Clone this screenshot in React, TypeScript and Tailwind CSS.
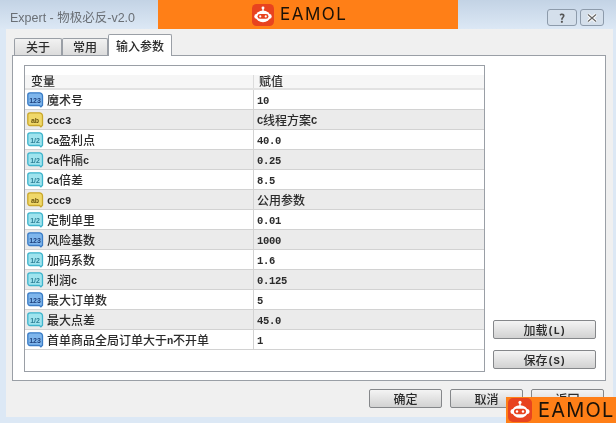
import type { ReactNode } from "react";

const rows: { kind: "int" | "str" | "dbl"; name: string; value: string }[] = [
  { kind: "int", name: "魔术号", value: "10" },
  { kind: "str", name: "ccc3", value: "C线程方案C" },
  { kind: "dbl", name: "Ca盈利点", value: "40.0" },
  { kind: "dbl", name: "Ca件隔c", value: "0.25" },
  { kind: "dbl", name: "Ca倍差", value: "8.5" },
  { kind: "str", name: "ccc9", value: "公用参数" },
  { kind: "dbl", name: "定制单里", value: "0.01" },
  { kind: "int", name: "风险基数", value: "1000" },
  { kind: "dbl", name: "加码系数", value: "1.6" },
  { kind: "dbl", name: "利润c", value: "0.125" },
  { kind: "int", name: "最大订单数", value: "5" },
  { kind: "dbl", name: "最大点差", value: "45.0" },
  { kind: "int", name: "首单商品全局订单大于n不开单", value: "1" },
];

// Latin runs are narrower than the CJK cell, like the bitmap font in the original
function Label({ text }: { text: string }) {
  const parts = text.split(/([\x20-\x7e]+)/).filter(Boolean);
  return (
    <span className="inline-flex items-center text-[12px] leading-none font-medium whitespace-nowrap text-[#2b2b2b]">
      {parts.map((part, i) =>
        /^[\x20-\x7e]/.test(part) ? (
          <span key={i} className="pt-[3px] font-['Liberation_Mono',monospace] text-[10.5px] font-bold tracking-[-0.3px]">
            {part}
          </span>
        ) : (
          <span key={i}>{part}</span>
        ),
      )}
    </span>
  );
}

function TypeIcon({ kind }: { kind: "int" | "str" | "dbl" }) {
  const fill = kind === "int" ? "#7fb6ec" : kind === "str" ? "#f0d869" : "#9fe3ee";
  const edge = kind === "int" ? "#3a7cc6" : kind === "str" ? "#c9a72c" : "#3fb4cc";
  const label = kind === "int" ? "123" : kind === "str" ? "ab" : "1/2";
  const ink = kind === "int" ? "#1c3f7c" : kind === "str" ? "#6b5510" : "#2d7f95";
  return (
    <svg width="17" height="16" viewBox="0 0 17 16" className="shrink-0">
      <path
        d="M3 .8h9.5a3 3 0 0 1 3 3v9.4l-1.6 1.7-1.4-1.4H3a2.2 2.2 0 0 1-2.2-2.2V3A2.2 2.2 0 0 1 3 .8z"
        fill={fill}
        stroke={edge}
        strokeWidth="1.3"
      />
      <text x="8" y="10.5" textAnchor="middle" fontSize="7" fontWeight="700" fontFamily="Liberation Sans, sans-serif" fill={ink}>
        {label}
      </text>
    </svg>
  );
}

function Button({ children, className }: { children: ReactNode; className: string }) {
  return (
    <div
      className={`flex h-[19px] items-center justify-center rounded-[2px] border border-[#85878a] bg-gradient-to-b from-[#f4f4f4] to-[#d2d2d2] text-[12px] leading-none font-medium text-[#2b2b2b] ${className}`}
    >
      {children}
    </div>
  );
}

function Logo({ size }: { size: number }) {
  return (
    <svg width={size} height={size} viewBox="0 0 24 24" className="shrink-0">
      <rect width="24" height="24" rx="5" fill="#e8431f" />
      <circle cx="12" cy="4.4" r="1.6" fill="#fff" />
      <rect x="11.3" y="5" width="1.4" height="3" fill="#fff" />
      <rect x="2.5" y="11" width="19" height="5" rx="2.5" fill="#fff" />
      <ellipse cx="12" cy="13.5" rx="7.8" ry="6.3" fill="#fff" />
      <rect x="6" y="10.8" width="12" height="5.4" rx="2.7" fill="#e8431f" />
      <circle cx="9" cy="13.5" r="1.2" fill="#fff" />
      <circle cx="15" cy="13.5" r="1.2" fill="#fff" />
    </svg>
  );
}

function Tab({ label, active, className }: { label: string; active?: boolean; className: string }) {
  return (
    <div
      className={`flex items-center justify-center rounded-t-[2px] border border-b-0 border-[#9a9fa6] text-[12px] leading-none font-medium text-[#2b2b2b] ${
        active ? "relative z-10 -mb-px h-[22px] bg-white" : "h-[17px] bg-gradient-to-b from-[#f2f2f2] to-[#dcdcdc]"
      } ${className}`}
    >
      {label}
    </div>
  );
}

export default function App() {
  return (
    <div className="relative h-[423px] w-[616px] overflow-hidden bg-[#dce8f5] font-['Noto_Sans_CJK_SC','Liberation_Sans',sans-serif] blur-[0.5px]">
      {/* Title bar */}
      <div className="flex h-[29px] items-center justify-between bg-gradient-to-b from-[#c3d3e5] to-[#dce8f5] pr-[12px] pl-[10px]">
        <span className="pt-[7px] font-['Liberation_Sans','Noto_Sans_CJK_SC',sans-serif] text-[12.5px] text-[#6a6f75]">Expert - 物极必反-v2.0</span>
        <div className="mt-[6px] flex gap-[3px]">
          <div className="flex h-[17px] w-[30px] items-center justify-center rounded-[3px] border border-[#8d9bab] bg-[#d4dfeb] text-[12px] leading-none font-bold text-[#555]">
            ?
          </div>
          <div className="flex h-[17px] w-[24px] items-center justify-center rounded-[3px] border border-[#8d9bab] bg-[#d4dfeb]">
            <svg width="12" height="10" viewBox="0 0 12 10">
              <path d="M2 1.5l8 7M10 1.5l-8 7" stroke="#fff" strokeWidth="3" />
              <path d="M2 1.5l8 7M10 1.5l-8 7" stroke="#666" strokeWidth="1.2" />
            </svg>
          </div>
        </div>
      </div>

      {/* Dialog client area */}
      <div className="mr-[3px] ml-[6px] flex h-[388px] flex-col bg-[#f0f0f0] pt-[5px] pr-[7px] pl-[6px]">
        <div className="flex items-end pl-[2px]">
          <Tab label="关于" className="w-[48px]" />
          <Tab label="常用" className="w-[46px]" />
          <Tab label="输入参数" active className="w-[64px]" />
        </div>

        <div className="flex h-[326px] gap-[8px] border border-[#9a9fa6] bg-white pt-[9px] pr-[9px] pb-[8px] pl-[11px]">
          {/* Inputs table */}
          <div className="flex w-[461px] flex-col border border-[#9a9fa6] bg-white">
            <div className="flex h-[24px] items-end border-b-2 border-[#e2e2e2] text-[12px] leading-none font-medium text-[#2b2b2b]">
              <div className="flex h-[13px] w-[229px] items-center border-r border-[#dcdcdc] bg-[#f6f6f6] pl-[6px]">
                <span className="-mt-[2px]">变量</span>
              </div>
              <div className="flex h-[13px] flex-1 items-center bg-[#f6f6f6] pl-[5px]">
                <span className="-mt-[2px]">赋值</span>
              </div>
            </div>
            {rows.map((row, i) => (
              <div
                key={row.name}
                className={`flex h-[20px] items-center border-b border-[#d2d2d2] ${i % 2 === 1 ? "bg-[#ebebeb]" : "bg-white"}`}
              >
                <div className="flex h-full w-[229px] items-center gap-[3px] border-r border-[#d2d2d2] pl-[2px]">
                  <TypeIcon kind={row.kind} />
                  <Label text={row.name} />
                </div>
                <div className="flex items-center pl-[3px]">
                  <Label text={row.value} />
                </div>
              </div>
            ))}
          </div>

          {/* Load / save */}
          <div className="flex flex-1 flex-col justify-end gap-[11px] pb-[3px]">
            <Button className="w-[103px]">
              <Label text="加载(L)" />
            </Button>
            <Button className="w-[103px]">
              <Label text="保存(S)" />
            </Button>
          </div>
        </div>

        <div className="mt-[8px] flex justify-end gap-[8px] pr-[2px]">
          <Button className="w-[73px]">确定</Button>
          <Button className="w-[73px]">取消</Button>
          <Button className="w-[73px]">返回</Button>
        </div>
      </div>

      {/* Watermarks */}
      <div className="absolute top-0 left-[158px] flex h-[29px] w-[300px] items-center gap-[6px] bg-[#ff7f17] pl-[94px]">
        <Logo size={22} />
        <span className="font-['Inter','Liberation_Sans',sans-serif] text-[17px] leading-none font-normal tracking-[1.5px] text-[#1a1208]">EAMOL</span>
      </div>
      <div className="absolute top-[397px] left-[506px] flex h-[26px] w-[110px] items-center gap-[6px] bg-[#ff7f17] pl-[2px]">
        <Logo size={24} />
        <span className="font-['Inter','Liberation_Sans',sans-serif] text-[20px] leading-none font-normal tracking-[1.2px] text-[#1a1208]">EAMOL</span>
      </div>
    </div>
  );
}
